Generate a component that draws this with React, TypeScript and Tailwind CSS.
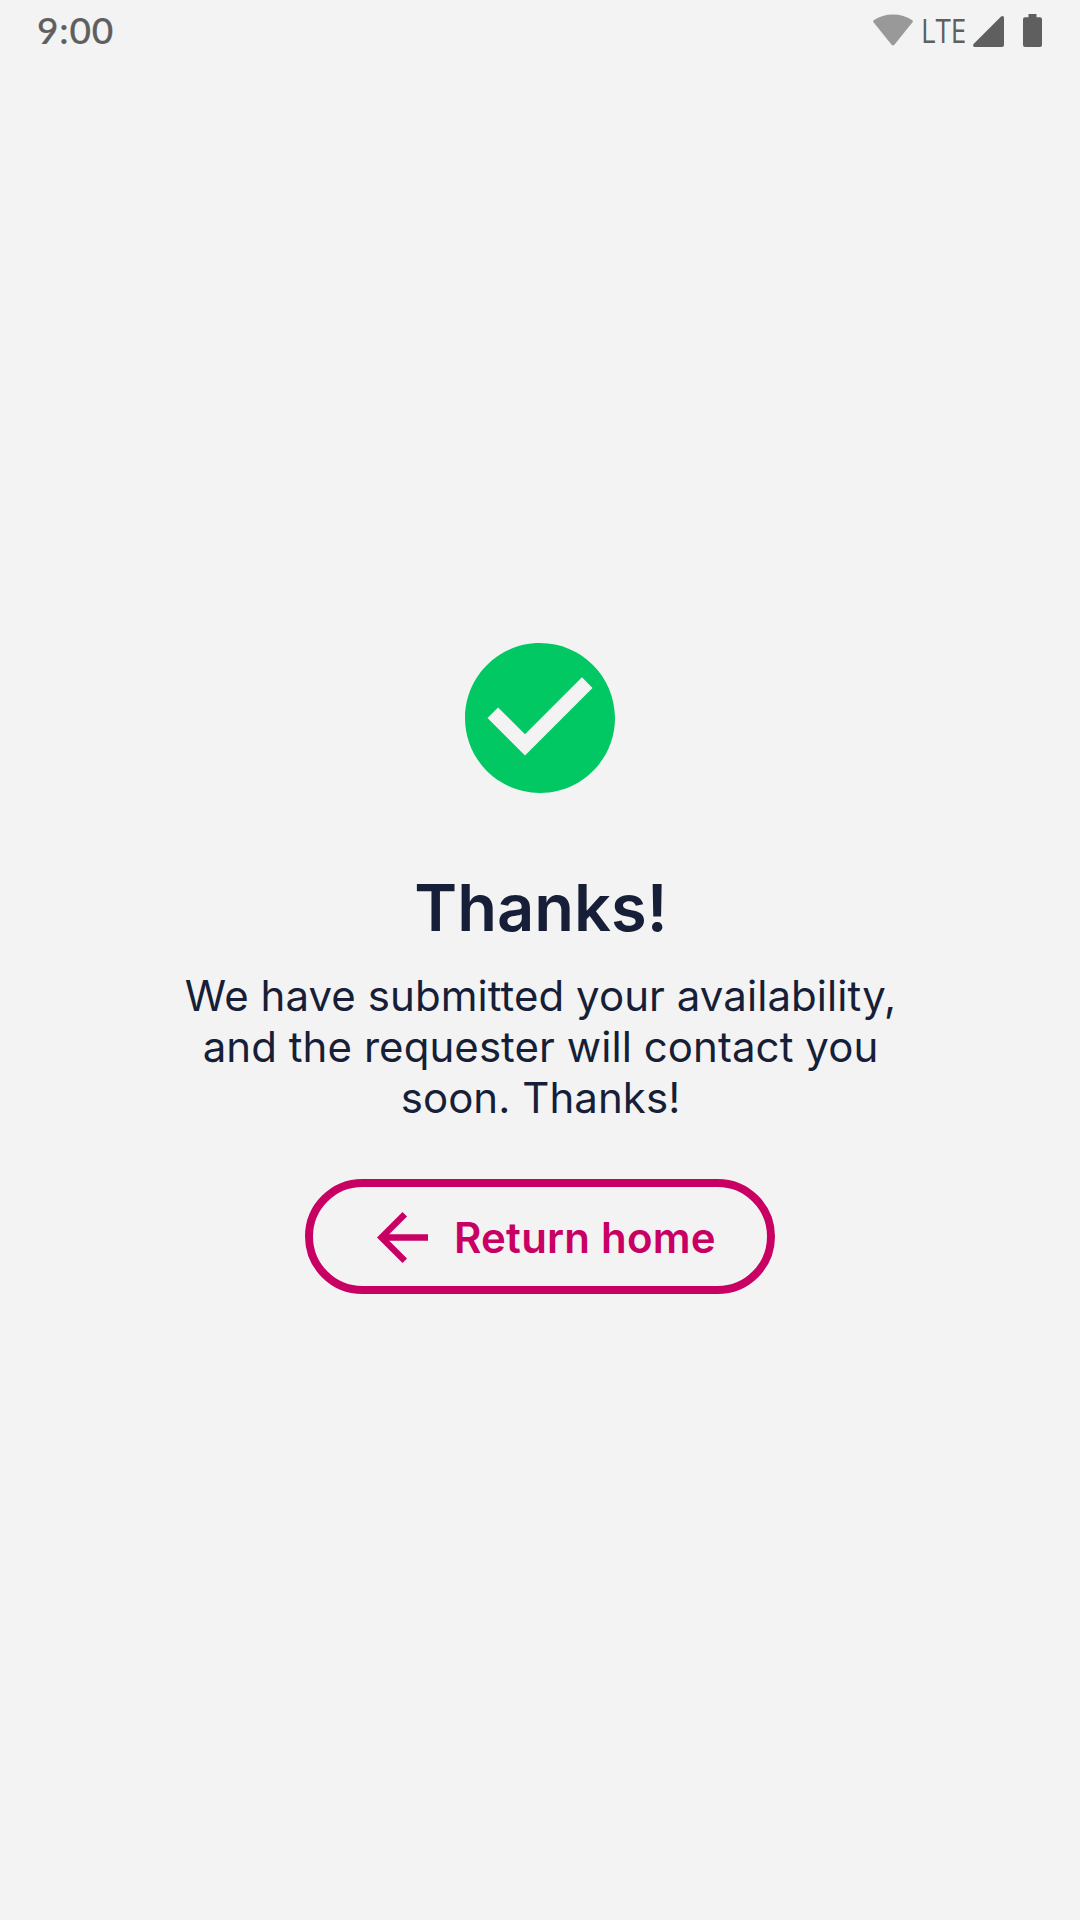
export default function App() {
  return (
    <div className="flex h-[1920px] w-[1080px] flex-col bg-[#f3f3f3] font-['Inter',sans-serif] text-[#171f38]">
      <header className="flex h-[60px] shrink-0 items-start justify-between pr-[38px] pl-[37px] text-[#5f5f5f]">
        <span className="mt-[9px] origin-left scale-x-[1.03] font-['Lato',sans-serif] text-[36px] leading-[42px] font-medium tracking-[0.8px] [-webkit-text-stroke:0.2px_#5f5f5f]">9:00</span>
        <div className="flex items-start pt-[14px]">
          <svg width="40" height="32" viewBox="0 0 40 32" fill="#999999"><path d="M.7 6.300Q9 .4 20 .4T39.300 6.300Q40.300 7 39.500 8.300L21.400 30.800Q20 32.200 18.600 30.800L.5 8.300Q-.3 7 .7 6.300Z" /></svg>
          <span className="ml-[8px] w-[52px] origin-left scale-x-[0.87] font-['Open_Sans',sans-serif] text-[32px] leading-[34px]">LTE</span>
          <svg className="mt-[2px]" width="31" height="31" viewBox="0 0 31 31" fill="currentColor"><path d="M27.800.7Q31-1 31 2V29Q31 31 29 31H1.500Q-.8 30.500.6 28Z" /></svg>
          <svg className="ml-[19px]" width="19" height="33" viewBox="0 0 19 33" fill="currentColor"><path d="M5.500 0H13.500V3.300H17Q19 3.300 19 5.300V31Q19 33 17 33H2Q0 33 0 31V5.300Q0 3.300 2 3.300H5.500Z" /></svg>
        </div>
      </header>
      <main className="flex flex-col items-center pt-[583px]">
        <svg width="150" height="150" viewBox="2 2 20 20" fill="#02c864"><path d="M12 2C6.480 2 2 6.480 2 12s4.480 10 10 10 10-4.480 10-10S17.520 2 12 2zm-2 15l-5-5 1.410-1.410L10 14.170l7.590-7.590L19 8l-9 9z" /></svg>
        <h1 className="mt-[75px] pl-[2px] text-[65px] leading-[80px] font-semibold">Thanks!</h1>
        <p className="mt-[22px] w-[760px] pl-[1px] text-center text-[42px] leading-[51px] tracking-[0.06px]">We have submitted your availability, and the requester will contact you soon. Thanks!</p>
        <button className="mt-[56px] flex h-[115px] w-[470px] items-center rounded-full border-[8px] border-[#c80064] pl-[64px] text-[42px] font-semibold tracking-[0.2px] text-[#c80064]">
          <svg className="mt-[1px] shrink-0" width="51" height="51" viewBox="4 4 16 16" fill="currentColor"><path d="M20 11H7.830l5.590-5.590L12 4l-8 8 8 8 1.410-1.410L7.830 13H20v-2z" /></svg>
          <span className="mt-[2px] ml-[26px] whitespace-nowrap">Return home</span>
        </button>
      </main>
    </div>
  );
}
